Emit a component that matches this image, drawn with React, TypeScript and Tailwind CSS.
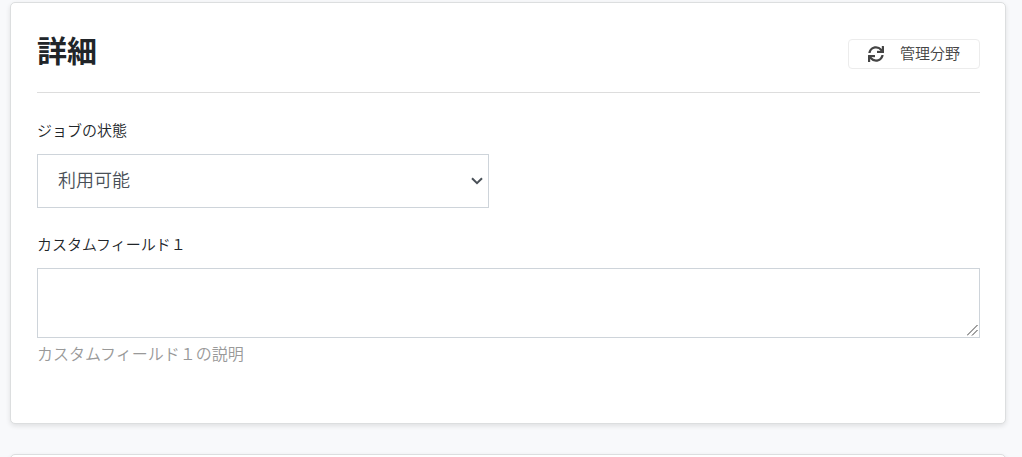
import React from 'react'
import { FaSync } from 'react-icons/fa'

const statuses = ['利用可能', '進行中', '完了']

function Card({ children }: { children?: React.ReactNode }) {
  const cardStyles = [
    "bg-white rounded-[5px]",
    "border border-[#dcdedf]",
    "pl-[26px] pr-[25px] py-7",
    "shadow-[0_2px_5px_rgba(0,0,0,0.1)]"
  ].join(' ')

  return <section className={cardStyles}>{children}</section>
}

function CardHeader({ title }: { title: string }) {
  return (
    <header className="flex items-center justify-between border-b border-[#dddddd] pb-[19px]">
      <h2 className="text-[30px] leading-[42px] font-bold text-[#212529]">{title}</h2>
      <button
        type="button"
        className="mt-1 flex h-[30px] items-center gap-4 rounded border border-[#ececec] px-[19px] text-[15px] text-[#444444]"
      >
        <FaSync className="size-4" aria-hidden="true" />
        管理分野
      </button>
    </header>
  )
}

function App() {
  return (
    <main className="flex min-h-screen flex-col gap-[30px] bg-[#f8f9fb] pt-0.5 pr-4 pl-2.5 font-['Liberation_Sans','Noto_Sans_CJK_JP',sans-serif] font-[350] text-[#212529]">
      <Card>
        <CardHeader title="詳細" />
        <form className="flex flex-col gap-[25px] pt-[26px] pb-7">
          <div className="grid grid-cols-2 gap-10">
            <div className="flex flex-col gap-[11px]">
              <label htmlFor="status" className="text-[15px] leading-6">ジョブの状態</label>
              <div className="relative">
                <select
                  id="status"
                  className="block h-[54px] w-full appearance-none border border-[#ced4da] bg-white px-5 text-lg text-[#495057]"
                >
                  {statuses.map((s) => <option key={s}>{s}</option>)}
                </select>
                <svg
                  viewBox="0 0 12 8"
                  className="pointer-events-none absolute inset-y-0 right-1.5 my-auto h-2 w-3 fill-none stroke-[#495057] stroke-2"
                  aria-hidden="true"
                >
                  <path d="M1 1.2 6 6.2 11 1.2" />
                </svg>
              </div>
            </div>
          </div>
          <div className="flex flex-col">
            <label htmlFor="custom-field" className="mb-[11px] text-[15px] leading-6">カスタムフィールド１</label>
            <div className="relative">
              <textarea
                id="custom-field"
                aria-describedby="custom-field-help"
                className="block h-[70px] w-full resize-none border border-[#ced4da] bg-white px-5 py-3 text-lg text-[#495057]"
              />
              <svg
                viewBox="0 0 11 11"
                className="pointer-events-none absolute right-0.5 bottom-0.5 size-[11px] fill-none stroke-[#444444]"
                aria-hidden="true"
              >
                <path d="M0 10.5 10.5 0M5 10.5 10.5 5" />
              </svg>
            </div>
            <p id="custom-field-help" className="mt-[5px] text-base leading-6 text-[#999999]">
              カスタムフィールド１の説明
            </p>
          </div>
        </form>
      </Card>
      <Card />
    </main>
  )
}

export default App
